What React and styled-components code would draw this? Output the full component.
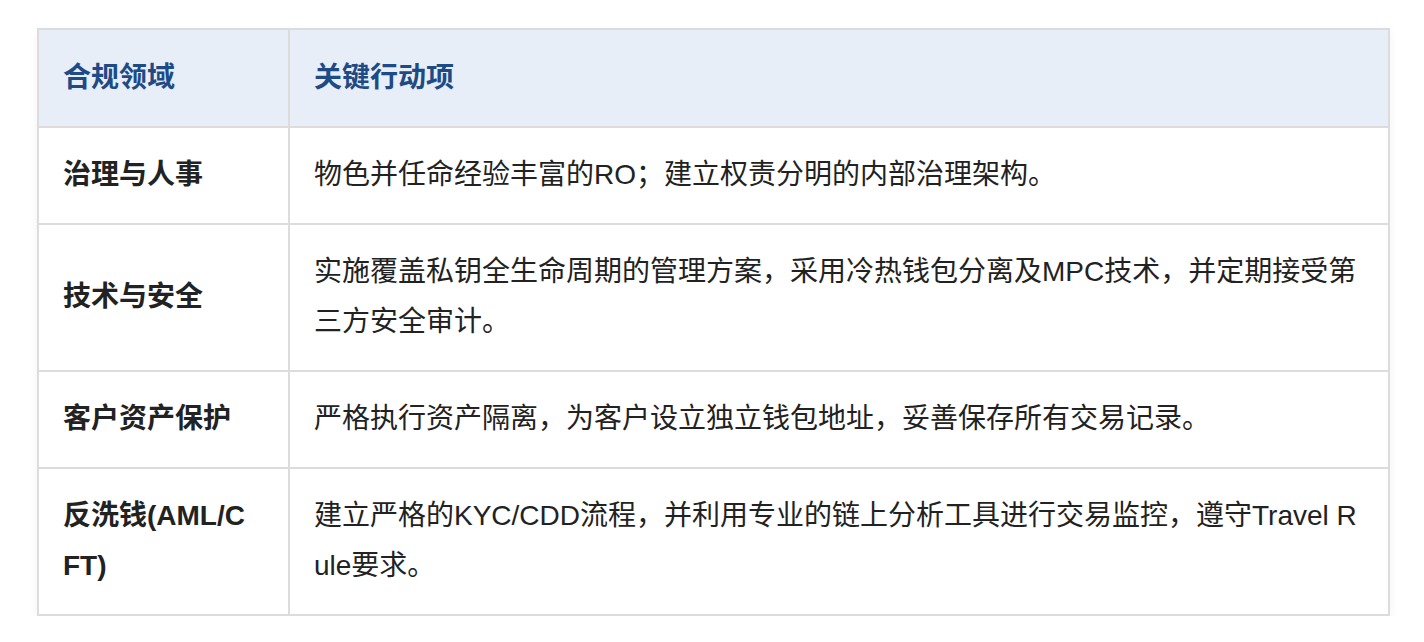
import React from 'react';
import styled, { createGlobalStyle } from 'styled-components';

const GlobalStyle = createGlobalStyle`
  body {
    margin: 0;
    background: #ffffff;
    font-family: "Liberation Sans", "Noto Sans CJK SC", sans-serif;
  }
`;

const Page = styled.div`
  padding: 28px 34px 0 37px;
`;

const Table = styled.table`
  width: 1353px;
  border-collapse: collapse;
  table-layout: fixed;
  font-size: 28px;
  line-height: 50px;
  color: #222;
  box-shadow: 0 4px 10px rgba(0, 0, 0, 0.05);
`;

const HeadCell = styled.th`
  background: #e8eef7;
  color: #1e4b86;
  font-weight: 700;
  text-align: left;
  padding: 23px 26px 23px 24px;
  border: 2px solid #dcdcdc;
`;

const Cell = styled.td`
  padding: 22px 26px 23px 24px;
  border: 2px solid #dcdcdc;
  word-break: break-all;
  font-weight: ${(p) => (p.$bold ? 700 : 400)};
  vertical-align: middle;
`;

const rows = [
  ['治理与人事', '物色并任命经验丰富的RO；建立权责分明的内部治理架构。'],
  ['技术与安全', '实施覆盖私钥全生命周期的管理方案，采用冷热钱包分离及MPC技术，并定期接受第三方安全审计。'],
  ['客户资产保护', '严格执行资产隔离，为客户设立独立钱包地址，妥善保存所有交易记录。'],
  ['反洗钱(AML/CFT)', '建立严格的KYC/CDD流程，并利用专业的链上分析工具进行交易监控，遵守Travel Rule要求。'],
];

export default function App() {
  return (
    <Page>
      <GlobalStyle />
      <Table>
        <colgroup>
          <col style={{ width: 251 }} />
          <col />
        </colgroup>
        <thead>
          <tr>
            <HeadCell>合规领域</HeadCell>
            <HeadCell>关键行动项</HeadCell>
          </tr>
        </thead>
        <tbody>
          {rows.map(([area, action]) => (
            <tr key={area}>
              <Cell $bold>{area}</Cell>
              <Cell>{action}</Cell>
            </tr>
          ))}
        </tbody>
      </Table>
    </Page>
  );
}
